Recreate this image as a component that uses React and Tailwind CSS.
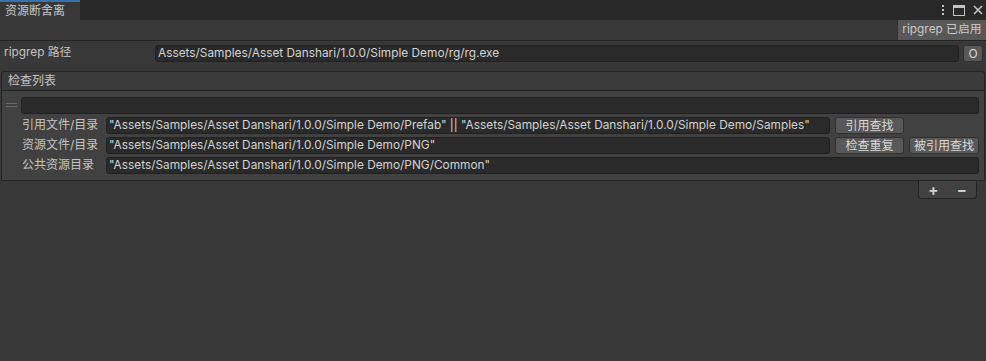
import React from "react";

const font = { fontFamily: 'Inter, "Noto Sans CJK SC", sans-serif' };

function Field({ children, className = "" }) {
  return (
    <div
      className={
        "h-[17px] rounded-[3px] bg-[#2a2a2a] border border-[#212121] text-[#d2d2d2] text-[11.85px] leading-[15px] px-[2px] whitespace-nowrap overflow-hidden " +
        className
      }
    >
      {children}
    </div>
  );
}

function Btn({ children, className = "" }) {
  return (
    <div
      className={
        "h-[17px] rounded-[3px] bg-[#585858] border border-[#303030] text-[#d8d8d8] text-[12px] leading-[15px] flex items-center justify-center shrink-0 " +
        className
      }
    >
      {children}
    </div>
  );
}

export default function App() {
  return (
    <div style={font} className="w-[986px] h-[361px] bg-[#383838] flex flex-col text-[12px] text-[#c4c4c4] overflow-hidden">
      {/* tab bar */}
      <div className="h-[20px] bg-[#282828] flex items-stretch shrink-0">
        <div className="w-[80px] bg-[#383838] border-t-2 border-[#3a72b0] flex items-center pl-[5px] text-[#c8c8c8] text-[12px]">
          资源断舍离
        </div>
        <div className="flex-1" />
        <div className="flex items-center gap-[8px] pr-[3px] text-[#c4c4c4]">
          <svg width="4" height="12" viewBox="0 0 4 12">
            <rect x="1" y="1" width="2" height="2" fill="#c4c4c4" />
            <rect x="1" y="5" width="2" height="2" fill="#c4c4c4" />
            <rect x="1" y="9" width="2" height="2" fill="#c4c4c4" />
          </svg>
          <svg width="12" height="11" viewBox="0 0 12 11">
            <rect x="0.5" y="0.5" width="11" height="10" fill="none" stroke="#c4c4c4" />
            <rect x="0" y="0" width="12" height="3" fill="#c4c4c4" />
          </svg>
          <svg width="10" height="10" viewBox="0 0 10 10">
            <path d="M1 1 L9 9 M9 1 L1 9" stroke="#c4c4c4" strokeWidth="1.6" />
          </svg>
        </div>
      </div>
      {/* toolbar */}
      <div className="h-[21px] flex justify-end border-b border-[#232323] shrink-0">
        <div className="w-[89px] bg-[#585858] border-l border-[#303030] flex items-center justify-center text-[#c8c8c8] text-[11.85px]">
          ripgrep 已启用
        </div>
      </div>
      {/* ripgrep path row */}
      <div className="flex items-center h-[18px] mt-[3px] pl-[4px] pr-[3px] gap-[4px]">
        <div className="w-[147px] shrink-0 text-[#c4c4c4] text-[11.85px]">ripgrep 路径</div>
        <Field className="flex-1">Assets/Samples/Asset Danshari/1.0.0/Simple Demo/rg/rg.exe</Field>
        <Btn className="w-[20px]">O</Btn>
      </div>
      {/* list */}
      <div className="mt-[9px] mx-[1px]">
        <div className="h-[20px] bg-[#3b3b3b] border border-[#242424] rounded-t-[3px] flex items-center pl-[6px] text-[#c4c4c4]">
          检查列表
        </div>
        <div className="bg-[#414141] border border-t-0 border-[#242424] h-[90px] pl-[4px] pr-[5px] pt-[5px] flex flex-col">
          <div className="flex items-center gap-[4px] h-[18px]">
            <div className="w-[11px] flex flex-col gap-[2px] shrink-0">
              <div className="h-[1px] bg-[#6a6a6a]" />
              <div className="h-[1px] bg-[#6a6a6a]" />
            </div>
            <Field className="flex-1" />
          </div>
          <div className="flex items-center h-[18px] mt-[2px] pl-[16px] gap-[5px]">
            <div className="w-[79px] shrink-0">引用文件/目录</div>
            <Field className="w-[724px]">"Assets/Samples/Asset Danshari/1.0.0/Simple Demo/Prefab" || "Assets/Samples/Asset Danshari/1.0.0/Simple Demo/Samples"</Field>
            <Btn className="w-[69px]">引用查找</Btn>
          </div>
          <div className="flex items-center h-[18px] mt-[2px] pl-[16px] gap-[5px]">
            <div className="w-[79px] shrink-0">资源文件/目录</div>
            <Field className="w-[724px]">"Assets/Samples/Asset Danshari/1.0.0/Simple Demo/PNG"</Field>
            <Btn className="w-[69px]">检查重复</Btn>
            <Btn className="w-[70px]">被引用查找</Btn>
          </div>
          <div className="flex items-center h-[18px] mt-[2px] pl-[16px] gap-[5px]">
            <div className="w-[79px] shrink-0">公共资源目录</div>
            <Field className="flex-1">"Assets/Samples/Asset Danshari/1.0.0/Simple Demo/PNG/Common"</Field>
          </div>
        </div>
        <div className="flex justify-end pr-[8px]">
          <div className="w-[59px] h-[18px] bg-[#414141] border border-t-0 border-[#242424] rounded-b-[3px] flex items-center justify-around text-[#d0d0d0] text-[15px] font-bold leading-none">
            <span>+</span>
            <span>−</span>
          </div>
        </div>
      </div>
    </div>
  );
}
